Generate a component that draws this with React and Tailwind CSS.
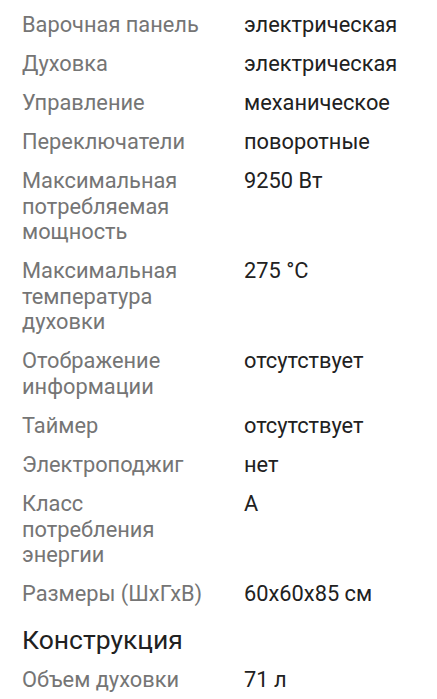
const specs = [
  ["Варочная панель", "электрическая"],
  ["Духовка", "электрическая"],
  ["Управление", "механическое"],
  ["Переключатели", "поворотные"],
  ["Максимальная потребляемая мощность", "9250 Вт"],
  ["Максимальная температура духовки", "275 °C"],
  ["Отображение информации", "отсутствует"],
  ["Таймер", "отсутствует"],
  ["Электроподжиг", "нет"],
  ["Класс потребления энергии", "A"],
  ["Размеры (ШхГхВ)", "60x60x85 см"],
];

const construction = [["Объем духовки", "71 л"]];

function SpecRow({ label, value }) {
  return (
    <div className="grid grid-cols-[190px_1fr] gap-x-8 py-[6.8px]">
      <div className="text-[#757575]">{label}</div>
      <div className="text-[#212121]">{value}</div>
    </div>
  );
}

export default function App() {
  return (
    <div
      className="bg-white min-h-screen px-[22px] pt-[5px] text-[21.8px] leading-[25.5px]"
      style={{ fontFamily: "Roboto, 'Noto Sans', sans-serif" }}
    >
      {specs.map(([label, value]) => (
        <SpecRow key={label} label={label} value={value} />
      ))}
      <h2 className="text-[26.5px] leading-[32px] text-[#212121] pt-[10px] pb-[5px]">Конструкция</h2>
      {construction.map(([label, value]) => (
        <SpecRow key={label} label={label} value={value} />
      ))}
    </div>
  );
}
